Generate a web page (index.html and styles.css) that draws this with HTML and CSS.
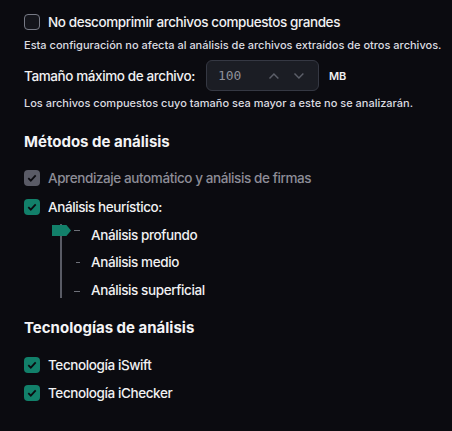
FILE: index.html
```html
<!DOCTYPE html>
<html lang="es">
<head>
<meta charset="utf-8">
<link rel="stylesheet" href="styles.css">
</head>
<body>
<div class="page">
  <label class="row row-first">
    <span class="cb cb-off"></span>
    <span class="label">No descomprimir archivos compuestos grandes</span>
  </label>
  <p class="hint hint-1">Esta configuración no afecta al análisis de archivos extraídos de otros archivos.</p>

  <div class="size-row">
    <span class="label">Tamaño máximo de archivo:</span>
    <div class="spin">
      <span class="spin-value">100</span>
      <svg class="chev" width="12" height="8" viewBox="0 0 12 8"><path d="M1.5 6.5 L6 2 L10.5 6.5" fill="none" stroke="#5c5f69" stroke-width="1.5"/></svg>
      <svg class="chev" width="12" height="8" viewBox="0 0 12 8"><path d="M1.5 1.5 L6 6 L10.5 1.5" fill="none" stroke="#5c5f69" stroke-width="1.5"/></svg>
    </div>
    <span class="unit">MB</span>
  </div>
  <p class="hint hint-2">Los archivos compuestos cuyo tamaño sea mayor a este no se analizarán.</p>

  <h2 class="heading heading-1">Métodos de análisis</h2>

  <label class="row row-a">
    <span class="cb cb-disabled"><svg width="10" height="8" viewBox="0 0 10 8"><path d="M1.3 4.2 L3.8 6.6 L8.7 1.4" fill="none" stroke="#0b0b10" stroke-width="1.8"/></svg></span>
    <span class="label label-disabled">Aprendizaje automático y análisis de firmas</span>
  </label>
  <label class="row row-b">
    <span class="cb cb-on"><svg width="10" height="8" viewBox="0 0 10 8"><path d="M1.3 4.2 L3.8 6.6 L8.7 1.4" fill="none" stroke="#0b0b10" stroke-width="1.8"/></svg></span>
    <span class="label">Análisis heurístico:</span>
  </label>

  <div class="slider">
    <span class="track"></span>
    <span class="thumb"></span>
    <div class="level level-1"><span class="tick"></span><span class="label">Análisis profundo</span></div>
    <div class="level level-2"><span class="tick tick-short"></span><span class="label">Análisis medio</span></div>
    <div class="level level-3"><span class="tick"></span><span class="label">Análisis superficial</span></div>
  </div>

  <h2 class="heading heading-2">Tecnologías de análisis</h2>

  <label class="row row-c">
    <span class="cb cb-on"><svg width="10" height="8" viewBox="0 0 10 8"><path d="M1.3 4.2 L3.8 6.6 L8.7 1.4" fill="none" stroke="#0b0b10" stroke-width="1.8"/></svg></span>
    <span class="label">Tecnología iSwift</span>
  </label>
  <label class="row row-d">
    <span class="cb cb-on"><svg width="10" height="8" viewBox="0 0 10 8"><path d="M1.3 4.2 L3.8 6.6 L8.7 1.4" fill="none" stroke="#0b0b10" stroke-width="1.8"/></svg></span>
    <span class="label">Tecnología iChecker</span>
  </label>
</div>
</body>
</html>
```

FILE: styles.css
```css
* { box-sizing: border-box; }
html, body {
  margin: 0;
  padding: 0;
  background: #0b0b10;
  width: 452px;
  height: 431px;
  overflow: hidden;
}
.page {
  padding: 12px 0 0 24px;
  font-family: Inter, "Noto Sans", "Liberation Sans", sans-serif;
  color: #f1f1f3;
}
.row {
  display: flex;
  align-items: center;
  height: 20px;
  gap: 8px;
}
.label {
  font-size: 13.5px;
  font-weight: 500;
  line-height: 20px;
  letter-spacing: -0.4px;
  white-space: nowrap;
}
.label-disabled { color: #8d8d97; }
.cb {
  width: 16px;
  height: 16px;
  border-radius: 4px;
  display: flex;
  align-items: center;
  justify-content: center;
  flex: none;
}
.cb-off { border: 1.5px solid #777a85; background: #14151b; }
.cb-on { background: #12806a; }
.cb-disabled { background: #5a5b66; }

.hint {
  margin: 0;
  font-size: 11px;
  font-weight: 500;
  line-height: 16px;
  color: #dcdce0;
  white-space: nowrap;
  letter-spacing: 0;
}
.hint-1 { margin-top: 5px; }
.hint-2 { margin-top: 4px; }

.size-row {
  display: flex;
  align-items: center;
  margin-top: 7px;
  height: 31px;
}
.spin {
  margin-left: 11px;
  width: 113px;
  height: 31px;
  background: #1b1d24;
  border: 1px solid #353843;
  border-radius: 6px;
  display: flex;
  align-items: center;
  padding-left: 11px;
}
.spin-value {
  font-family: "DejaVu Sans Mono", "Liberation Mono", monospace;
  font-size: 13px;
  color: #8e9099;
  width: 51px;
}
.chev { display: block; margin-right: 13px; }
.unit {
  margin-left: 10px;
  font-size: 11px;
  font-weight: 600;
  color: #f1f1f3;
}

.heading {
  margin: 0;
  font-size: 15px;
  line-height: 20px;
  font-weight: 700;
  color: #f4f4f6;
}
.heading-1 { margin-top: 21px; }
.heading-2 { margin-top: 14px; }

.row-a { margin-top: 16px; }
.row-b { margin-top: 9px; }
.row-c { margin-top: 17px; }
.row-d { margin-top: 8px; }

.slider {
  position: relative;
  margin-top: 4px;
  padding-left: 50px;
}
.level {
  display: flex;
  align-items: center;
  height: 27.5px;
}
.tick {
  width: 6px;
  height: 1px;
  background: #6e7079;
  margin-right: 11px;
}
.tick-short { width: 4px; margin-left: 2px; }
.level-1 .tick { transform: translateY(-4px); }
.level-3 .tick { transform: translateY(2px); }
.track {
  position: absolute;
  left: 36px;
  top: 3px;
  width: 2px;
  height: 74px;
  background: #595b65;
}
.thumb {
  position: absolute;
  left: 28px;
  top: 4px;
  width: 19px;
  height: 11px;
  background: #12806a;
  clip-path: polygon(0 0, 76% 0, 100% 50%, 76% 100%, 0 100%);
}
```
